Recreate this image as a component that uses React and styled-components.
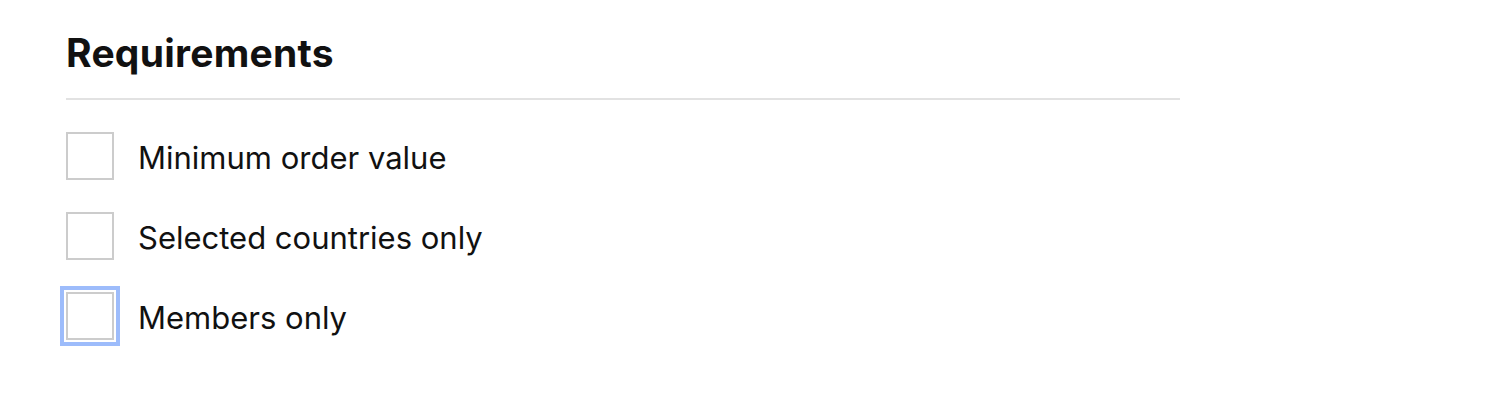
import React from "react";
import styled, { createGlobalStyle } from "styled-components";

const Global = createGlobalStyle`
  html, body { margin: 0; padding: 0; background: #fff; }
  body { font-family: Inter, "Liberation Sans", sans-serif; color: #111; }
`;

const Page = styled.div`
  padding: 29px 0 40px 66px;
  width: 1114px;
`;

const Title = styled.h2`
  margin: 0;
  font-size: 39px;
  line-height: 48px;
  font-weight: 700;
  color: #111;
  letter-spacing: 0.25px;
  padding-bottom: 21px;
  border-bottom: 2px solid #e2e2e2;
`;

const List = styled.div`
  display: flex;
  flex-direction: column;
  gap: 32px;
  padding-top: 32px;
`;

const Row = styled.label`
  display: flex;
  align-items: center;
  gap: 24px;
  height: 48px;
  cursor: pointer;
`;

const Box = styled.span`
  box-sizing: border-box;
  width: 48px;
  height: 48px;
  flex: none;
  border: 2px solid #cccccc;
  background: #fff;
  ${(p) => p.$focused && `outline: 4px solid #9dbcfb; outline-offset: 2px;`}
`;

const Label = styled.span`
  font-size: 31px;
  line-height: 48px;
  margin: 2px 0 -2px;
  color: #111;
`;

const items = [
  { text: "Minimum order value" },
  { text: "Selected countries only" },
  { text: "Members only", focused: true },
];

export default function App() {
  return (
    <>
      <Global />
      <Page>
        <Title>Requirements</Title>
        <List>
          {items.map((it) => (
            <Row key={it.text}>
              <Box $focused={it.focused} />
              <Label>{it.text}</Label>
            </Row>
          ))}
        </List>
      </Page>
    </>
  );
}
